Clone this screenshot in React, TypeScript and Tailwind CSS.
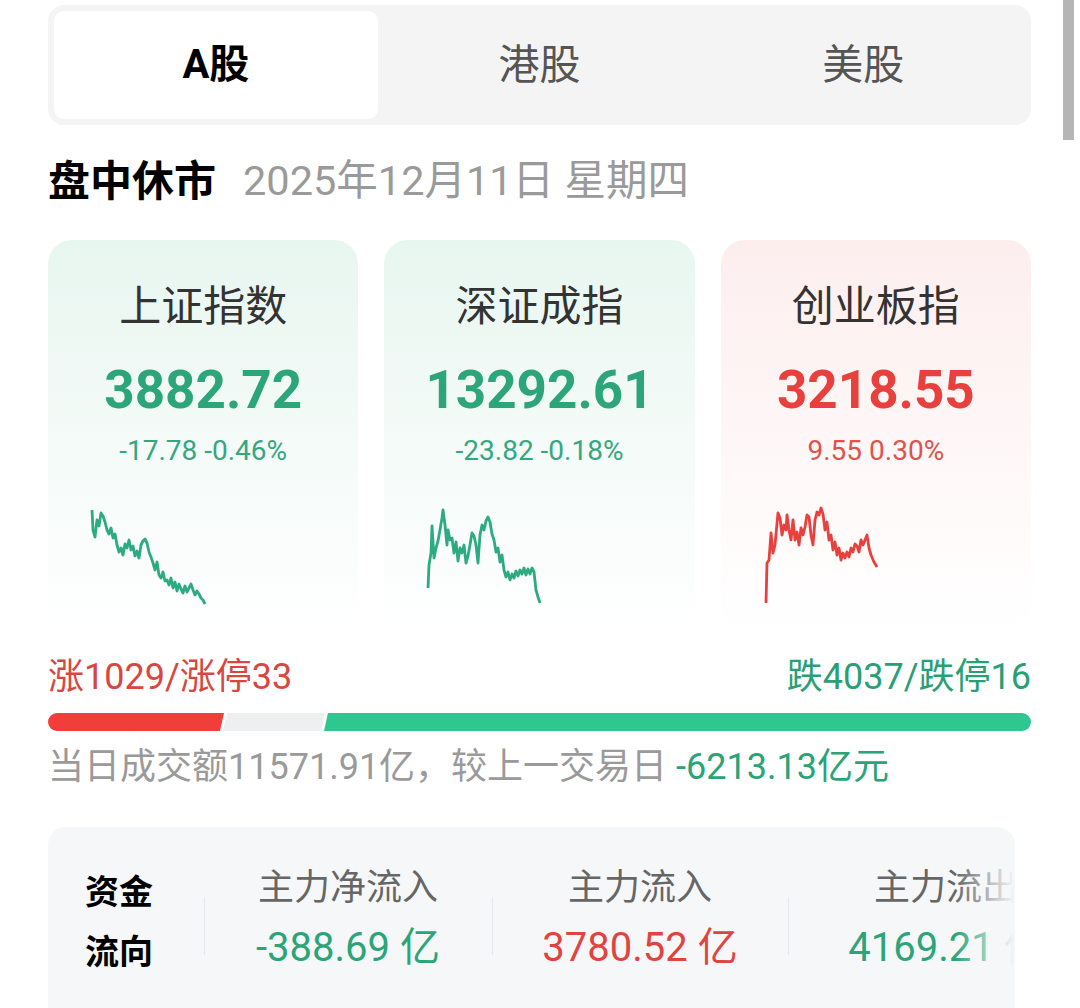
import React from "react";

const TABS = ["A股", "港股", "美股"];

type IndexCard = {
  name: string;
  value: string;
  change: string;
  up: boolean;
  x: number;
  points: string;
};

const INDEXES: IndexCard[] = [
  {
    name: "上证指数",
    value: "3882.72",
    change: "-17.78 -0.46%",
    up: false,
    x: 48,
    points:
      "92,510 93,530 95,537 97,520 99,526 101,513 103,516 105,522 107,530 109,534 111,528 113,538 115,534 117,545 119,552 121,548 123,555 125,544 127,548 129,540 131,550 133,546 135,556 137,551 139,558 141,545 143,541 145,539 147,543 149,552 151,557 153,563 155,570 157,562 159,575 161,578 163,572 165,581 167,580 169,585 171,578 173,588 175,582 177,591 179,584 181,589 183,593 185,586 187,592 189,588 191,584 193,590 195,595 197,591 199,594 201,598 203,600 205,604",
  },
  {
    name: "深证成指",
    value: "13292.61",
    change: "-23.82 -0.18%",
    up: false,
    x: 384,
    points:
      "428,588 429,565 431,553 432,526 434,558 436,548 438,541 440,530 442,518 443,510 445,525 447,545 448,530 450,540 452,538 454,553 456,542 458,561 460,548 462,553 464,545 466,563 468,556 470,545 472,533 474,536 476,545 478,563 480,535 482,525 484,530 486,521 488,517 490,522 492,534 494,540 496,552 498,548 500,562 502,555 504,570 506,577 508,572 510,580 512,574 514,578 516,571 518,576 520,570 522,574 524,568 526,575 528,569 530,574 532,568 534,572 536,590 538,597 540,603",
  },
  {
    name: "创业板指",
    value: "3218.55",
    change: "9.55 0.30%",
    up: true,
    x: 720,
    points:
      "765,603 766,563 768,560 770,533 772,553 774,545 777,513 779,518 781,535 783,525 785,530 786,515 788,530 790,540 792,520 794,540 796,532 798,545 800,528 802,535 804,527 806,515 808,517 810,535 812,545 814,520 816,512 818,515 820,508 822,514 824,530 826,522 828,540 830,535 832,550 834,542 836,555 838,548 840,560 842,553 844,558 846,552 848,557 850,548 852,552 854,544 856,546 858,552 860,540 862,545 864,540 866,535 868,548 870,555 873,562 876,567",
  },
];

const FLOWS = [
  { label: "主力净流入", value: "-388.69 亿", up: false, width: "w-[288px]" },
  { label: "主力流入", value: "3780.52 亿", up: true, width: "w-[296px]" },
  { label: "主力流出", value: "4169.21 亿", up: false, width: "w-[316px]" },
];

function Sparkline({ card }: { card: IndexCard }) {
  return (
    <svg width="310" height="110" viewBox={`${card.x} 500 310 110`} className="block">
      <polyline
        points={card.points}
        fill="none"
        stroke={card.up ? "#e8403c" : "#2cab80"}
        strokeWidth="2.8"
        strokeLinejoin="round"
      />
    </svg>
  );
}

export default function App() {
  return (
    <div className="relative min-h-[1008px] bg-white font-[Roboto,'Noto_Sans_CJK_SC',sans-serif]">
      {/* scrollbar thumb */}
      <div className="absolute right-[6px] top-0 h-[140px] w-[11px] bg-[#b5b5b5]" />

      <div className="px-[48px] pt-[5px] w-[1079px]">
        {/* Market tabs */}
        <div className="grid grid-cols-3 rounded-[16px] bg-[#f4f4f4] p-[6px] h-[120px]">
          {TABS.map((tab, i) => (
            <div
              key={tab}
              className={`flex items-center justify-center rounded-[10px] leading-none ${
                i === 0 ? "bg-white text-[40px] font-bold text-black" : "text-[41px] text-[#555]"
              }`}
            >
              {tab}
            </div>
          ))}
        </div>

        {/* Status */}
        <div className="mt-[28px] flex items-center h-[56px]">
          <span className="text-[42px] font-bold text-black">盘中休市</span>
          <span className="ml-[27px] text-[41.5px] text-[#9a9a9a]">2025年12月11日 星期四</span>
        </div>

        {/* Index cards */}
        <div className="mt-[31px] grid grid-cols-3 gap-[26px]">
          {INDEXES.map((card) => (
            <div
              key={card.name}
              className={`flex h-[390px] flex-col items-center rounded-[24px] pt-[41px] bg-gradient-to-b ${
                card.up ? "from-[#fdeeee] to-white" : "from-[#e8f6f0] to-white"
              }`}
            >
              <div className="text-[42px] leading-[52px] text-[#333]">{card.name}</div>
              <div
                className={`mt-[25px] text-[53px] font-bold leading-[64px] ${
                  card.up ? "text-[#e8403c]" : "text-[#2ca57a]"
                }`}
              >
                {card.value}
              </div>
              <div
                className={`mt-[13px] text-[28px] leading-[32px] ${card.up ? "text-[#e0524b]" : "text-[#35a77f]"}`}
              >
                {card.change}
              </div>
              <div className="mt-[33px]">
                <Sparkline card={card} />
              </div>
            </div>
          ))}
        </div>

        {/* Advance / decline */}
        <div className="mt-[25px] flex items-center justify-between text-[36px] leading-[44px]">
          <span className="text-[#d8473f]">涨1029/涨停33</span>
          <span className="text-[#2a9f76]">跌4037/跌停16</span>
        </div>
        <svg width="983" height="18" viewBox="0 0 983 18" className="mt-[14px] block">
          <path d="M9,0 H176 L172,18 H9 A9,9 0 0 1 9,0 Z" fill="#f23e3b" />
          <path d="M179,0 H277 L273,18 H175 Z" fill="#eeeff1" />
          <path d="M280,0 H974 A9,9 0 0 1 974,18 H276 Z" fill="#2dc78f" />
        </svg>
        <div className="mt-[14px] text-[36px] leading-[44px] text-[#9a9a9a]">
          当日成交额11571.91亿，较上一交易日 <span className="text-[#2aa377]">-6213.13亿元</span>
        </div>

        {/* Fund flow */}
        <div className="relative mt-[38px] h-[220px] w-[967px] overflow-hidden rounded-[18px] bg-[#f6f7f9]">
          <div className="flex pt-[35px]">
            <div className="w-[156px] shrink-0 pl-[37px] text-[34px] font-bold leading-[60px] text-black">
              <div>资金</div>
              <div>流向</div>
            </div>
            {FLOWS.map((f) => (
              <div key={f.label} className={`relative flex shrink-0 flex-col items-center ${f.width}`}>
                <div className="absolute left-0 top-[35px] h-[58px] w-px bg-[#e6e7ea]" />
                <div className="text-[36px] leading-[52px] text-[#666]">{f.label}</div>
                <div
                  className={`mt-[8px] text-[40px] leading-[52px] ${f.up ? "text-[#e0443e]" : "text-[#2ba578]"}`}
                >
                  {f.value}
                </div>
              </div>
            ))}
          </div>
          <div className="absolute right-0 top-0 h-full w-[60px] bg-gradient-to-r from-transparent to-[#f6f7f9]" />
        </div>
      </div>
    </div>
  );
}
